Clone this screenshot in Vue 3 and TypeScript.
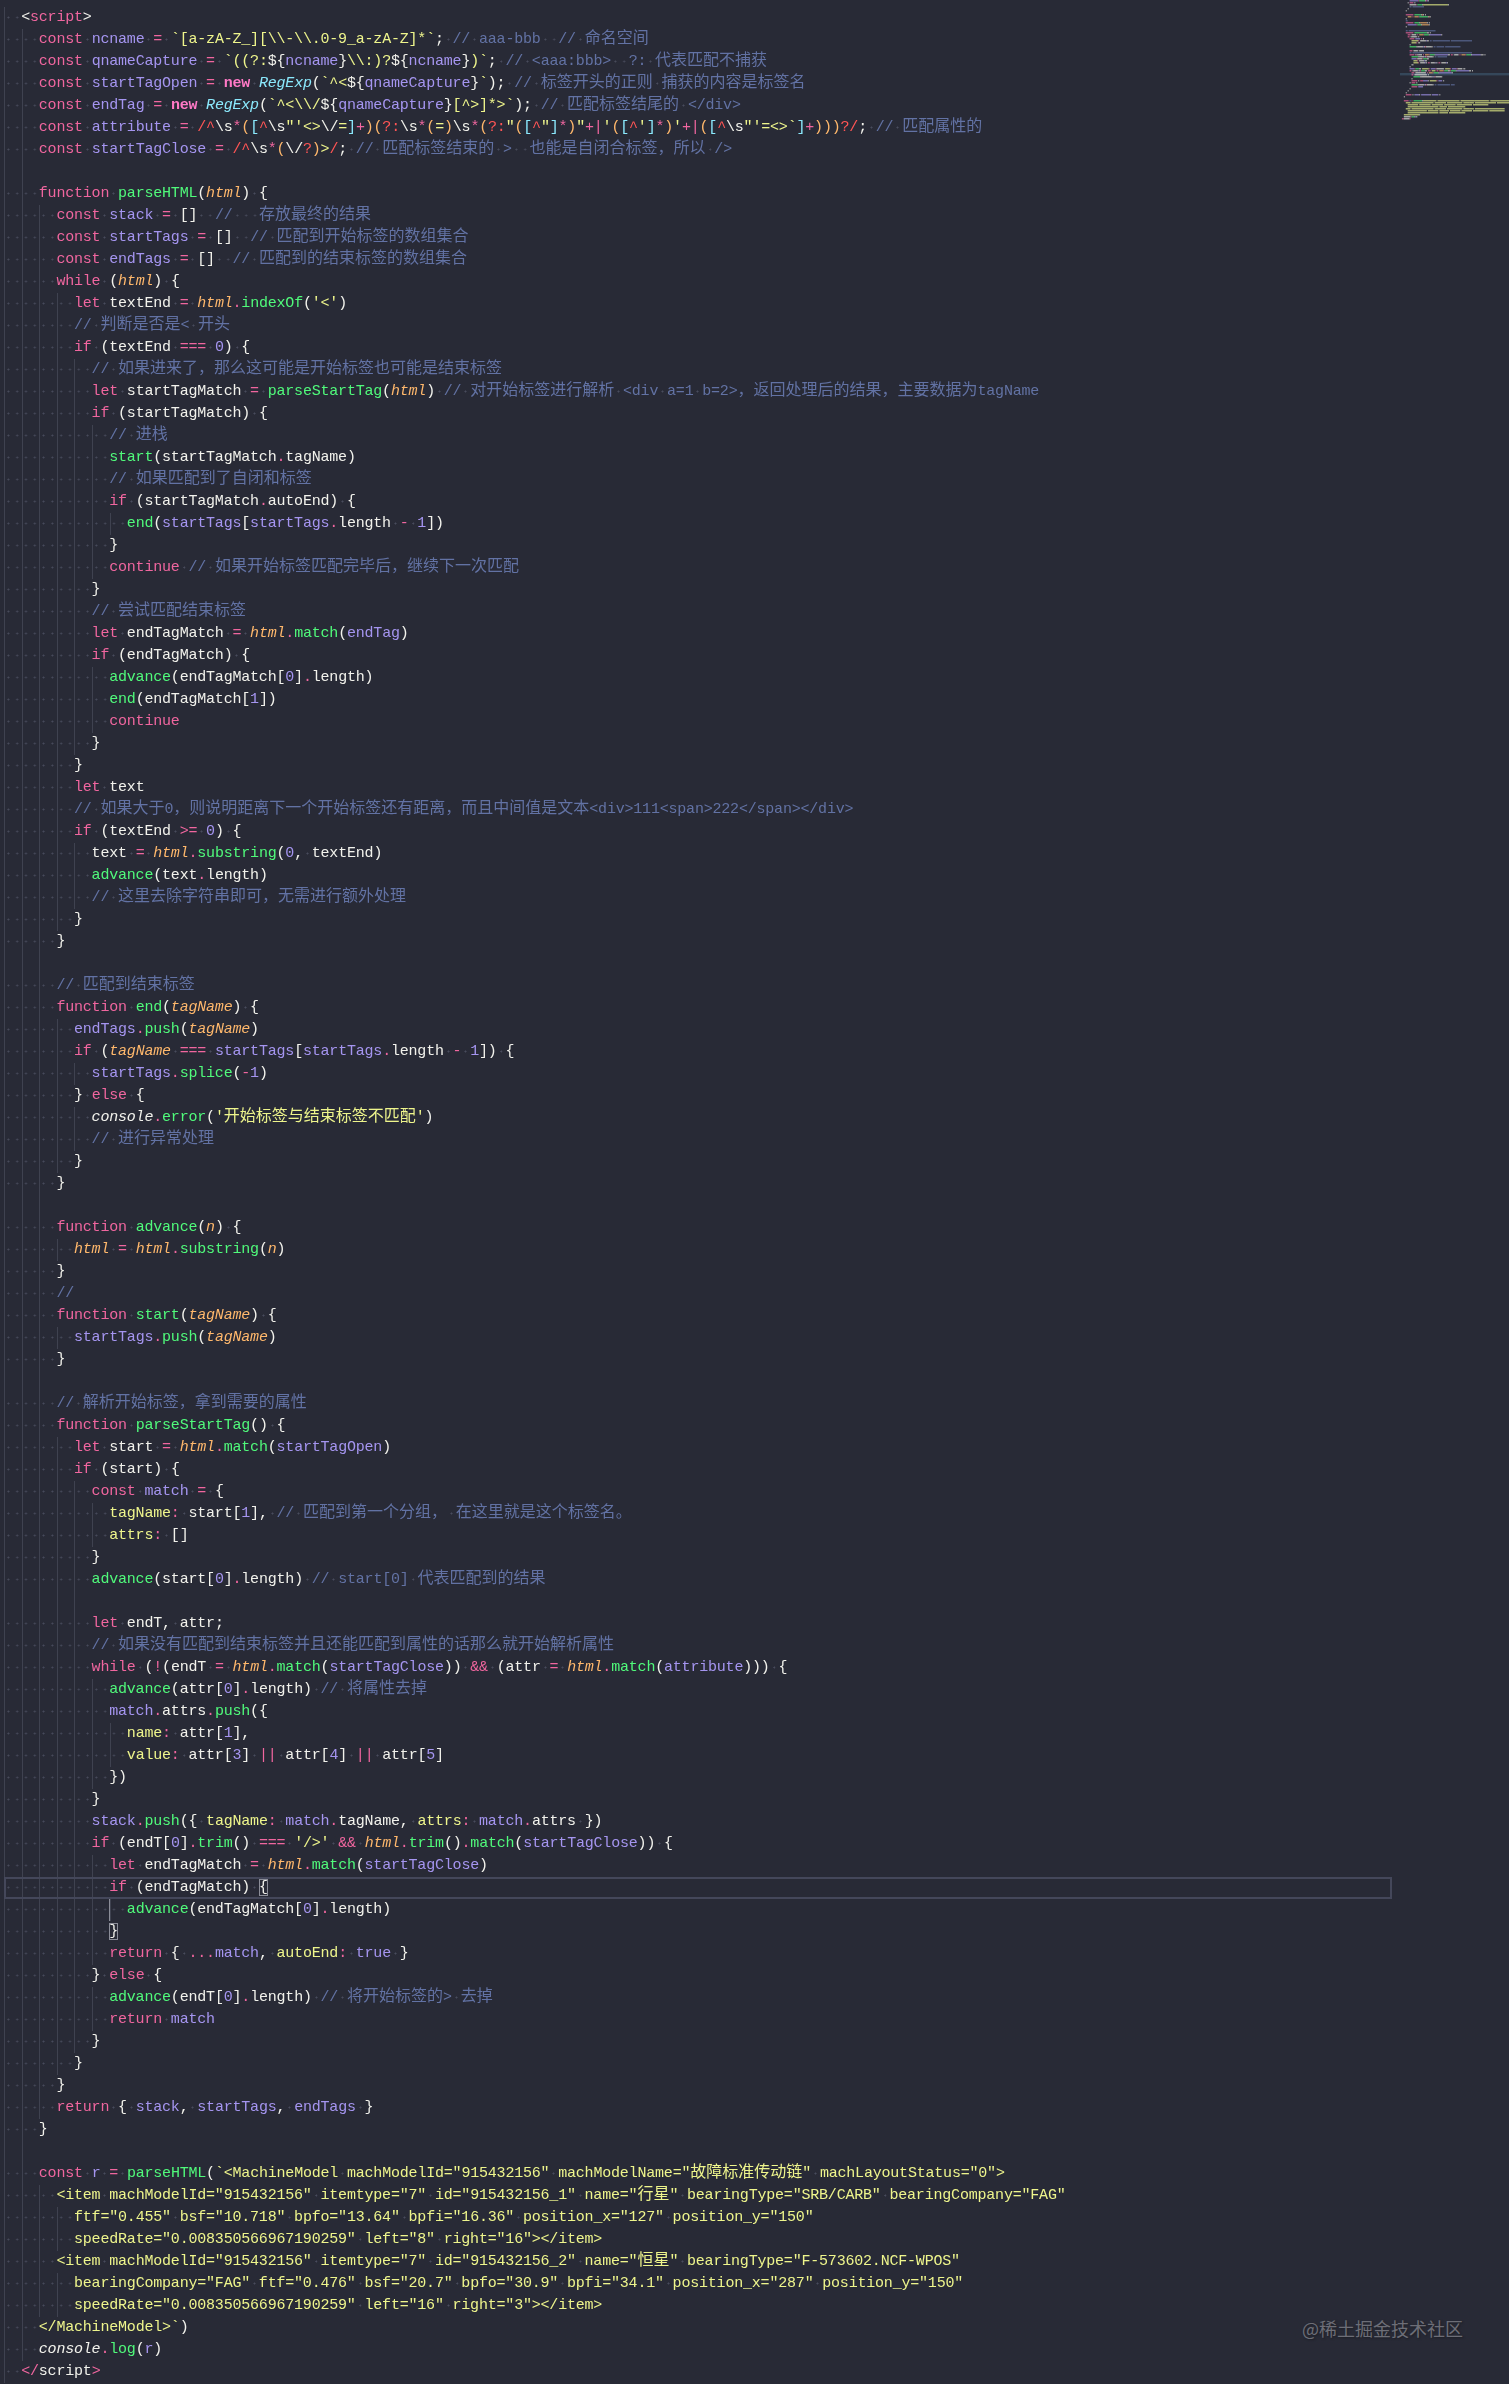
<script setup lang="ts">
type Token = { key: string; text: string }
type Seg = { text: string; cls: string }

const source: string[] = [
  "§t<§kscript§t>",
  "  §kconst §vncname §o= §s`[a-zA-Z_][\\\\-\\\\.0-9_a-zA-Z]*`§w; §c// aaa-bbb  // 命名空间",
  "  §kconst §vqnameCapture §o= §s`((?:§w${§vncname§w}§s\\\\:)?§w${§vncname§w}§s)`§w; §c// <aaa:bbb>  ?: 代表匹配不捕获",
  "  §kconst §vstartTagOpen §o= §Knew §nRegExp§w(§s`^<§w${§vqnameCapture§w}§s`§w); §c// 标签开头的正则 捕获的内容是标签名",
  "  §kconst §vendTag §o= §Knew §nRegExp§w(§s`^<\\\\/§w${§vqnameCapture§w}§s[^>]*>`§w); §c// 匹配标签结尾的 </div>",
  "  §kconst §vattribute §o= §R/^\\s*([^\\s\"'<>\\/=]+)(?:\\s*(=)\\s*(?:\"([^\"]*)\"+|'([^']*)'+|([^\\s\"'=<>`]+)))?/§w; §c// 匹配属性的",
  "  §kconst §vstartTagClose §o= §R/^\\s*(\\/?)>/§w; §c// 匹配标签结束的 >  也能是自闭合标签，所以 />",
  "  ",
  "  function parseHTML(html) {",
  "    const stack = []  //   存放最终的结果",
  "    const startTags = []  // 匹配到开始标签的数组集合",
  "    const endTags = []  // 匹配到的结束标签的数组集合",
  "    while (html) {",
  "      let textEnd = html.indexOf('<')",
  "      // 判断是否是< 开头",
  "      if (textEnd === 0) {",
  "        // 如果进来了，那么这可能是开始标签也可能是结束标签",
  "        let startTagMatch = parseStartTag(html) // 对开始标签进行解析 <div a=1 b=2>，返回处理后的结果，主要数据为tagName",
  "        if (startTagMatch) {",
  "          // 进栈",
  "          start(startTagMatch.tagName)",
  "          // 如果匹配到了自闭和标签",
  "          if (startTagMatch.autoEnd) {",
  "            end(startTags[startTags.length - 1])",
  "          }",
  "          continue // 如果开始标签匹配完毕后，继续下一次匹配",
  "        }",
  "        // 尝试匹配结束标签",
  "        let endTagMatch = html.match(endTag)",
  "        if (endTagMatch) {",
  "          advance(endTagMatch[0].length)",
  "          end(endTagMatch[1])",
  "          continue",
  "        }",
  "      }",
  "      let text",
  "      // 如果大于0，则说明距离下一个开始标签还有距离，而且中间值是文本<div>111<span>222</span></div>",
  "      if (textEnd >= 0) {",
  "        text = html.substring(0, textEnd)",
  "        advance(text.length)",
  "        // 这里去除字符串即可，无需进行额外处理",
  "      }",
  "    }",
  "    ",
  "    // 匹配到结束标签",
  "    function end(tagName) {",
  "      endTags.push(tagName)",
  "      if (tagName === startTags[startTags.length - 1]) {",
  "        startTags.splice(-1)",
  "      } else {",
  "        console.error('开始标签与结束标签不匹配')",
  "        // 进行异常处理",
  "      }",
  "    }",
  "    ",
  "    function advance(n) {",
  "      html = html.substring(n)",
  "    }",
  "    //",
  "    function start(tagName) {",
  "      startTags.push(tagName)",
  "    }",
  "    ",
  "    // 解析开始标签，拿到需要的属性",
  "    function parseStartTag() {",
  "      let start = html.match(startTagOpen)",
  "      if (start) {",
  "        const match = {",
  "          tagName: start[1], // 匹配到第一个分组， 在这里就是这个标签名。",
  "          attrs: []",
  "        }",
  "        advance(start[0].length) // start[0] 代表匹配到的结果",
  "        ",
  "        let endT, attr;",
  "        // 如果没有匹配到结束标签并且还能匹配到属性的话那么就开始解析属性",
  "        while (!(endT = html.match(startTagClose)) && (attr = html.match(attribute))) {",
  "          advance(attr[0].length) // 将属性去掉",
  "          match.attrs.push({",
  "            name: attr[1],",
  "            value: attr[3] || attr[4] || attr[5]",
  "          })",
  "        }",
  "        stack.push({ tagName: match.tagName, attrs: match.attrs })",
  "        if (endT[0].trim() === '/>' && html.trim().match(startTagClose)) {",
  "          let endTagMatch = html.match(startTagClose)",
  "          §kif §w(endTagMatch) §B{",
  "            advance(endTagMatch[0].length)",
  "          §B}",
  "          return { ...match, autoEnd: true }",
  "        } else {",
  "          advance(endT[0].length) // 将开始标签的> 去掉",
  "          return match",
  "        }",
  "      }",
  "    }",
  "    return { stack, startTags, endTags }",
  "  }",
  "  ",
  "  §kconst §vr §o= §fparseHTML§w(§s`<MachineModel machModelId=\"915432156\" machModelName=\"故障标准传动链\" machLayoutStatus=\"0\">",
  "    §s<item machModelId=\"915432156\" itemtype=\"7\" id=\"915432156_1\" name=\"行星\" bearingType=\"SRB/CARB\" bearingCompany=\"FAG\"",
  "      §sftf=\"0.455\" bsf=\"10.718\" bpfo=\"13.64\" bpfi=\"16.36\" position_x=\"127\" position_y=\"150\"",
  "      §sspeedRate=\"0.008350566967190259\" left=\"8\" right=\"16\"></item>",
  "    §s<item machModelId=\"915432156\" itemtype=\"7\" id=\"915432156_2\" name=\"恒星\" bearingType=\"F-573602.NCF-WPOS\"",
  "      §sbearingCompany=\"FAG\" ftf=\"0.476\" bsf=\"20.7\" bpfo=\"30.9\" bpfi=\"34.1\" position_x=\"287\" position_y=\"150\"",
  "      §sspeedRate=\"0.008350566967190259\" left=\"16\" right=\"3\"></item>",
  "  §s</MachineModel>`§w)",
  "  console.log(r)",
  "§o</§tscript§o>",
]

const CURRENT_ROW = 85
const ACTIVE_GUIDE_ROW = 86

const KEYWORDS = new Set(["const", "let", "function", "if", "else", "while", "return", "continue"])
const CONSTANTS = new Set(["stack", "startTags", "endTags", "startTagOpen", "startTagClose", "endTag", "attribute", "match", "r", "true"])
const PARAMS = new Set(["html", "tagName", "n"])

function highlight(line: string): Token[] {
  const out: Token[] = []
  const re = /\/\/.*$|'[^']*'|[A-Za-z_]\w*|\d+|===|>=|&&|\|\||\.\.\.|[=\-!.:]| +|./g
  let prev = ""
  for (const m of line.matchAll(re)) {
    const t = m[0]
    const rest = line.slice(m.index + t.length)
    let key = "w"
    if (t.startsWith("//")) key = "c"
    else if (t.startsWith("'")) key = "s"
    else if (/^\d/.test(t)) key = "v"
    else if (/^[A-Za-z_]/.test(t)) {
      if (KEYWORDS.has(t)) key = "k"
      else if (rest.startsWith("(")) key = "f"
      else if (rest.startsWith(":")) key = "s"
      else if (prev === ".") key = "w"
      else if (t === "console") key = "I"
      else if (PARAMS.has(t)) key = "h"
      else if (CONSTANTS.has(t)) key = "v"
    } else if (/^(===|>=|&&|\|\||\.\.\.|[=\-!.:])$/.test(t)) key = "o"
    out.push({ key, text: t })
    if (t.trim()) prev = t
  }
  return out
}

function regexTokens(src: string): Token[] {
  const out: Token[] = []
  for (const m of src.matchAll(/\\.|./g)) {
    const t = m[0]
    let key = "s"
    if (t.startsWith("\\")) key = "w"
    else if ("/^?:".includes(t)) key = "r"
    else if ("*+|".includes(t)) key = "o"
    else if ("()".includes(t)) key = "q"
    else if ("[]".includes(t)) key = "a"
    out.push({ key, text: t })
  }
  return out
}

function tokenize(body: string): Token[] {
  if (!body.includes("§")) return highlight(body)
  return body
    .split("§")
    .filter(Boolean)
    .flatMap((part) => {
      const key = part[0]
      const text = part.slice(1)
      return key === "R" ? regexTokens(text) : [{ key, text }]
    })
}

function toSegs(tokens: Token[]): Seg[] {
  const segs: Seg[] = []
  for (const tok of tokens) {
    for (const piece of tok.text.split(/( +|[\u2e80-\u9fff\u3000-\u303f\uff00-\uffef]+)/).filter(Boolean)) {
      if (piece[0] === " ") segs.push({ text: piece, cls: "ws" })
      else if (/^[\u2e80-\u9fff\u3000-\u303f\uff00-\uffef]/.test(piece)) segs.push({ text: piece, cls: `cjk c-${tok.key}` })
      else segs.push({ text: piece, cls: `c-${tok.key}` })
    }
  }
  return segs
}

const rows = source.map((raw, index) => {
  const body = raw.trimStart()
  const spaces = raw.length - body.length
  const segs = body ? toSegs(tokenize(body)) : []
  return {
    index,
    guides: spaces / 2 + 1,
    indent: " ".repeat(spaces + 2),
    segs,
    blank: !body,
  }
})

const COLORS: Record<string, string> = {
  k: "#f0669f", K: "#ff79c6", o: "#f0669f", v: "#a595f0", w: "#f2f2ec", t: "#f2f2ec", f: "#50fa7b", I: "#f2f2ec",
  s: "#f1fa8c", c: "#6272a4", h: "#ffb86c", q: "#ffb86c", n: "#8be9fd", a: "#8be9fd", r: "#ff5555", B: "#f2f2ec",
}

const MAP_CHAR = 0.96
const MAP_ROW = 2

const mapBars = rows.flatMap((row) => {
  const y = 74 + (row.index - CURRENT_ROW) * MAP_ROW
  if (y < -2 || row.blank) return []
  let col = row.indent.length
  const bars: { x: number; y: number; w: number; fill: string }[] = []
  for (const seg of row.segs) {
    const isCjk = seg.cls.startsWith("cjk")
    const w = seg.text.length * (isCjk ? 2 : 1)
    if (seg.cls !== "ws") {
      const key = seg.cls.split("c-")[1]
      bars.push({ x: 8 + col * MAP_CHAR, y, w: w * MAP_CHAR, fill: COLORS[key] })
    }
    col += w
  }
  return bars
})
</script>

<template>
  <div class="editor">
    <div class="code">
      <div
        v-for="row in rows"
        :key="row.index"
        class="row"
        :class="{ current: row.index === CURRENT_ROW, 'active-guide': row.index === ACTIVE_GUIDE_ROW }"
        :style="{ '--guides': row.guides }"
      >
        <template v-if="!row.blank">
          <span class="ws">{{ row.indent }}</span>
          <span v-for="(seg, i) in row.segs" :key="i" :class="seg.cls">{{ seg.text }}</span>
        </template>
      </div>
    </div>
    <svg class="minimap" width="117" height="130" viewBox="0 0 117 130">
      <rect x="8" y="73" width="109" height="2.4" fill="#35475a" />
      <rect
        v-for="(bar, i) in mapBars"
        :key="i"
        :x="bar.x"
        :y="bar.y"
        :width="bar.w"
        height="1.5"
        :fill="bar.fill"
        opacity="0.62"
      />
    </svg>
    <div class="watermark">@稀土掘金技术社区</div>
  </div>
</template>

<style scoped>
.editor {
  position: relative;
  display: flex;
  align-items: flex-start;
  width: 1509px;
  height: 2384px;
  overflow: hidden;
  background: #282a36;
}

.code {
  flex: none;
  box-sizing: border-box;
  width: 1392px;
  padding: 7px 0 0 3.6px;
  font-family: "Liberation Mono", "Noto Sans CJK SC", monospace;
  font-size: 15px;
  letter-spacing: -0.2px;
  color: #f2f2ec;
  filter: blur(0.35px);
}

.row {
  height: 22px;
  line-height: 22px;
  white-space: pre;
  background-image: repeating-linear-gradient(to right, #3f4250 0, #3f4250 1px, transparent 1px, transparent 17.6px);
  background-repeat: no-repeat;
  background-size: calc(var(--guides) * 17.6px) 100%;
}

.current {
  box-shadow: inset 0 0 0 2px #44475a;
}

.active-guide {
  background-image: linear-gradient(#8b8d98, #8b8d98), repeating-linear-gradient(to right, #3f4250 0, #3f4250 1px, transparent 1px, transparent 17.6px);
  background-position: 105.6px 0, 0 0;
  background-size: 1px 100%, calc(var(--guides) * 17.6px) 100%;
}

.ws {
  background-image: radial-gradient(circle at 50% 50%, #484b5c 0.8px, transparent 1.2px);
  background-size: 8.8px 100%;
}

.cjk {
  font-family: "Noto Sans CJK SC", sans-serif;
  font-size: 16px;
  line-height: 0;
  letter-spacing: 0;
}

.c-k, .c-o { color: #f0669f; }
.c-K { color: #ff79c6; font-weight: 700; }
.c-v { color: #a595f0; }
.c-w, .c-t { color: #f2f2ec; }
.c-I { color: #f2f2ec; font-style: italic; }
.c-f { color: #50fa7b; }
.c-s { color: #eef58c; }
.c-c { color: #6272a4; }
.c-h { color: #ffb86c; font-style: italic; }
.c-q { color: #ffb86c; }
.c-n { color: #8be9fd; font-style: italic; }
.c-a { color: #8be9fd; }
.c-r { color: #ff5555; }
.c-B { color: #f2f2ec; outline: 1px solid #8b8d98; outline-offset: -1px; }

.minimap {
  flex: none;
  display: block;
  filter: blur(0.4px);
}

.watermark {
  position: absolute;
  top: 2314px;
  right: 46px;
  font-family: "Noto Sans CJK SC", sans-serif;
  font-size: 18px;
  line-height: 28px;
  color: #6d6e77;
  text-shadow: 1px 1px 2px #1c1d25;
}
</style>

<style>
body {
  background: #282a36;
}
</style>
